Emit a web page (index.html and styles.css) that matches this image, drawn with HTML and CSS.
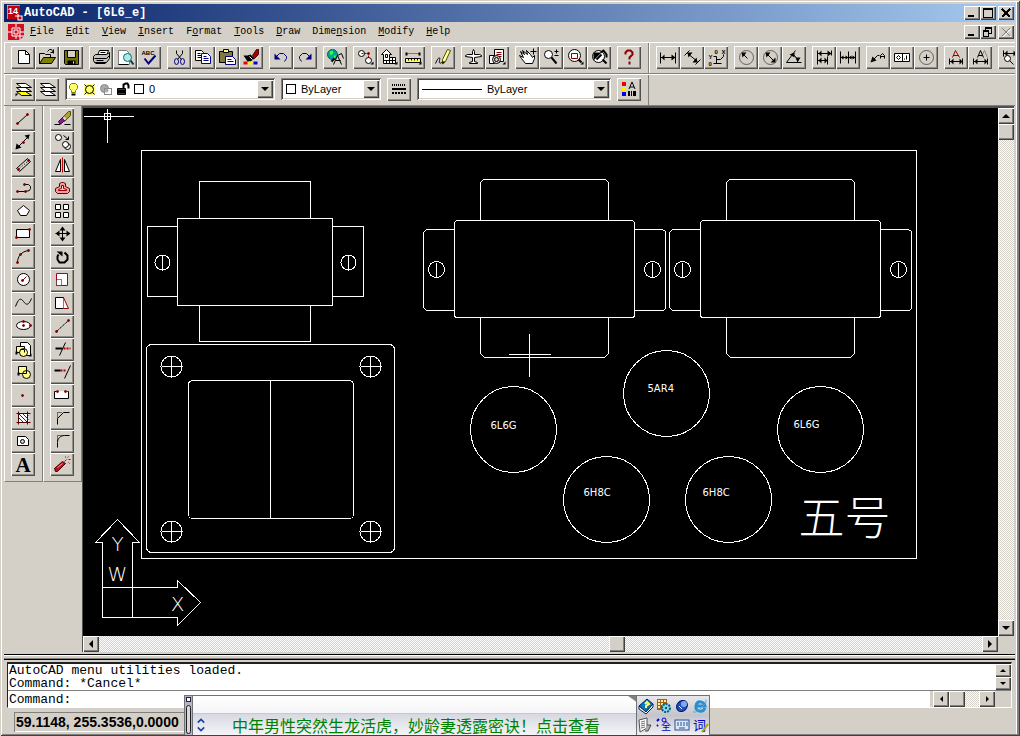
FILE: index.html
```html
<!DOCTYPE html>
<html lang="en">
<head>
<meta charset="utf-8">
<title>AutoCAD - [6L6_e]</title>
<link rel="stylesheet" href="styles.css">
</head>
<body>
<div class="window">
<header class="titlebar">
  <svg class="appicon" viewBox="0 0 16 16"><rect width="13" height="14" fill="#c00010"/><path d="M0 14V0H13" stroke="#fff" fill="none"/><text x="1" y="9" class="logo14">14</text><path d="M8 11H12M11 9V12" stroke="#fff"/><rect x="11" y="11" width="4" height="4" fill="#c00010" stroke="#fff"/></svg>
  <h1 class="title">AutoCAD - [6L6_e]</h1>
  <div class="winbtns">
    <button class="wbtn" aria-label="Minimize"><svg viewBox="0 0 16 14"><path d="M4 10H10" stroke="#000" stroke-width="2"/></svg></button>
    <button class="wbtn" aria-label="Maximize"><svg viewBox="0 0 16 14"><path d="M3.500 3H12.500V11.500H3.500V2" class="k"/><path d="M3 3H13" stroke="#000" stroke-width="2"/></svg></button>
    <button class="wbtn far" aria-label="Close"><svg viewBox="0 0 16 14"><path d="M4 3L12 11M12 3L4 11" stroke="#000" stroke-width="2"/></svg></button>
  </div>
</header>
<nav class="menubar">
  <svg class="docicon" viewBox="0 0 16 16"><path d="M0 0H16V12L12 16H0Z" fill="#d01020"/><path d="M0 8H4M12 8H16M8 0V3M8 12V15M4 4H12V12H4ZM6 6H10V10H6ZM12 16V12H16" stroke="#fff" fill="none"/></svg>
  <button class="menu"><u>F</u>ile</button><button class="menu"><u>E</u>dit</button><button class="menu"><u>V</u>iew</button><button class="menu"><u>I</u>nsert</button><button class="menu">F<u>o</u>rmat</button><button class="menu"><u>T</u>ools</button><button class="menu"><u>D</u>raw</button><button class="menu">Dime<u>n</u>sion</button><button class="menu"><u>M</u>odify</button><button class="menu"><u>H</u>elp</button>
  <div class="winbtns">
    <button class="wbtn" aria-label="Minimize drawing"><svg viewBox="0 0 16 14"><path d="M4 10H10" stroke="#000" stroke-width="2"/></svg></button>
    <button class="wbtn" aria-label="Restore drawing"><svg viewBox="0 0 16 14"><path d="M5.500 5V3.500H11.500V8.500H9M3.500 6.500H8.500V11.500H3.500Z" class="k"/><path d="M5 3H12M3 6H9" stroke="#000" stroke-width="2"/></svg></button>
    <button class="wbtn far" aria-label="Close drawing" disabled><svg viewBox="0 0 16 14"><path d="M5 4L13 12M13 4L5 12" stroke="#fff"/><path d="M4 3L12 11M12 3L4 11" stroke="#808080"/></svg></button>
  </div>
</nav>

<div class="row">
 <div class="toolbar">
  <div class="group">
   <button class="tool" aria-label="New"><svg viewBox="-.5 -.5 24 23"><path class="w" d="M7 4H14L18 8V17H7Z"/><path class="k" d="M14 4V8H18"/></svg></button>
   <button class="tool" aria-label="Open"><svg viewBox="-.5 -.5 24 23"><path d="M4 17V7H9L10 8H15V11" class="k" fill="#ffff90"/><path d="M4 17L8 11H20L16 17Z" stroke="#000" fill="#808000"/><path class="k" d="M12 5L14 3H16L18 6M18 3V7M15 6H18"/></svg></button>
   <button class="tool" aria-label="Save"><svg viewBox="-.5 -.5 24 23"><path d="M5 4H19V18H6L5 17Z" stroke="#000" fill="#707000"/><path d="M8 4H16V11H8Z" fill="#d4d0c8" stroke="#000"/><path d="M8 14H16V18H8Z" fill="#000"/><path d="M14 15V17" stroke="#fff"/></svg></button>
  </div>
  <div class="group">
   <button class="tool" aria-label="Print"><svg viewBox="-.5 -.5 24 23"><path class="w" d="M8 9L10 4H19L17 9"/><path class="k" d="M11 6H16M10 8H15"/><path d="M4 10L6 8H17L20 6V12L17 16H5L4 14Z" fill="#c8c4bc" stroke="#000"/><path class="k" d="M5 12H17L20 9M7 14H14M6 17H16"/></svg></button>
   <button class="tool" aria-label="Print preview"><svg viewBox="-.5 -.5 24 23"><path d="M5 4H13L16 7V18H5Z" fill="#fff" stroke="#808080"/><path class="k" d="M5 18H15"/><circle cx="14" cy="11" r="4" fill="#b0e8e8" stroke="#007070"/><path d="M17 14L20 18" stroke="#004050" stroke-width="2"/></svg></button>
   <button class="tool" aria-label="Spelling"><svg viewBox="-.5 -.5 24 23"><text x="4" y="8" class="tiny">ABC</text><path d="M7 12L11 17L18 9" stroke="#000080" stroke-width="2" fill="none"/></svg></button>
  </div>
  <div class="group">
   <button class="tool" aria-label="Cut"><svg viewBox="-.5 -.5 24 23"><path class="k" d="M9 4V7L14 13M15 4V7L10 13"/><g fill="none" stroke="#000080" stroke-width="1"><ellipse cx="9" cy="15" rx="2" ry="3"/><ellipse cx="15" cy="15" rx="2" ry="3"/></g></svg></button>
   <button class="tool" aria-label="Copy"><svg viewBox="-.5 -.5 24 23"><path class="w" d="M4 4H10L12 6V14H4Z"/><path class="k" d="M6 7H9M6 9H10M6 11H10"/><path d="M10 7H16L19 10V17H10Z" fill="#fff" stroke="#000080"/><path d="M12 10H15M12 12H17M12 14H17" stroke="#000080"/></svg></button>
   <button class="tool" aria-label="Paste"><svg viewBox="-.5 -.5 24 23"><path d="M4 5H17V16H4Z" fill="#807840" stroke="#000"/><path d="M8 3H13V6H8Z" fill="#ff8" stroke="#000"/><path d="M10 10H17L20 13V18H10Z" fill="#fff" stroke="#000080"/><path d="M12 13H16M12 15H18" stroke="#000080"/></svg></button>
   <button class="tool" aria-label="Match properties"><svg viewBox="-.5 -.5 24 23"><path d="M13 9L17 3H19V8L15 12Z" fill="#a00010" stroke="#500"/><path d="M4 9H8L11 8L15 12L11 15H8Z" fill="#000"/><path d="M10 10L13 13" stroke="#fff"/><rect x="4" y="15" width="4" height="3" fill="#e00"/><rect x="9" y="15" width="4" height="3" fill="#fe0"/><rect x="14" y="15" width="4" height="3" fill="#00e"/></svg></button>
  </div>
  <div class="group">
   <button class="tool" aria-label="Undo"><svg viewBox="-.5 -.5 24 23"><path d="M7 10L10 7H14L17 10V12L15 15" stroke="#000080" fill="none"/><path d="M5 7V13H11Z" fill="#000080"/></svg></button>
   <button class="tool" aria-label="Redo"><svg viewBox="-.5 -.5 24 23"><path d="M16 10L13 7H9L6 10V12L8 15" stroke="#000080" fill="none"/><path d="M18 7V13H12Z" fill="#000080"/></svg></button>
  </div>
  <div class="group">
   <button class="tool" aria-label="Launch browser"><svg viewBox="-.5 -.5 24 23"><circle cx="9" cy="8" r="5" fill="#00a0a0" stroke="#006060"/><path d="M6 5L9 4L10 7L7 9ZM10 9H13L11 12Z" fill="#3f3"/><path class="k" d="M10 18L14 9L18 18M12 14H17M14 9L18 7L20 12"/><path d="M8 15L11 12" stroke="#000" stroke-width="2"/></svg></button>
  </div>
  <div class="group">
   <button class="tool" aria-label="Object snap"><svg viewBox="-.5 -.5 24 23"><circle cx="8" cy="7" r="3" class="w"/><path d="M8 7H15V15" stroke="#800000" stroke-dasharray="2 1" fill="none"/><circle cx="15" cy="7" r="1" class="r"/><circle cx="15" cy="14" r="3" class="w"/><path d="M20 15V18H17Z"/></svg></button>
   <button class="tool" aria-label="UCS"><svg viewBox="-.5 -.5 24 23"><path class="w" d="M4 8L9 3L14 8H12V11H18V17H6V8Z"/><path class="k" d="M8 8H10V11H8ZM6 14H18M12 11V17M9 14V17M15 11V17"/><path d="M20 15V18H17Z"/></svg></button>
   <button class="tool" aria-label="Distance"><svg viewBox="-.5 -.5 24 23"><path d="M5 7H18" stroke="#800000" stroke-dasharray="1 1"/><path d="M4 6H6V9H4ZM17 6H19V9H17Z"/><path d="M4 12H19V16H4Z" fill="#ffff60" stroke="#000"/><path class="k" d="M7 12V14M10 12V14M13 12V14M16 12V14"/><path d="M20 15V18H17Z"/></svg></button>
  </div>
  <div class="group">
   <button class="tool" aria-label="Redraw"><svg viewBox="-.5 -.5 24 23"><path d="M4 17C7 10 9 10 8 14S10 17 12 14" class="k"/><path d="M11 13L16 3L19 4L14 15L11 17Z" fill="#ffffa0" stroke="#505000"/><path d="M11 15V18L14 15Z"/></svg></button>
  </div>
  <div class="group">
   <button class="tool" aria-label="Aerial view"><svg viewBox="-.5 -.5 24 23"><path class="w" d="M11 5L12 3L13 5V8H18L20 9V10L13 11V15L16 16V17H8V16L11 15V11L4 10V9L6 8H11Z"/></svg></button>
   <button class="tool" aria-label="Named views"><svg viewBox="-.5 -.5 24 23"><path class="w" d="M4 9H9V17H4ZM9 3H18V15H9Z"/><path d="M11 6H16M11 8H16M11 10H16" stroke="#800000"/><circle cx="11" cy="13" r="4" fill="#d4d0c8" stroke="#000"/><circle cx="11" cy="13" r="2" class="k"/><path d="M20 15V18H17Z"/></svg></button>
  </div>
  <div class="group">
   <button class="tool" aria-label="Pan"><svg viewBox="-.5 -.5 24 23"><path class="w" d="M5 5L9 8L7 4L12 8L11 4L15 8L17 11L19 9L19 12L17 17H10L6 12L4 9L8 11Z"/><path class="k" d="M18 2V8M15 5H21"/></svg></button>
   <button class="tool" aria-label="Zoom realtime"><svg viewBox="-.5 -.5 24 23"><circle cx="9" cy="8" r="4" class="w"/><path d="M12 11L17 17" stroke="#000" stroke-width="2"/><path class="k" d="M17 3V7M15 5H19M15 9H19"/></svg></button>
   <button class="tool" aria-label="Zoom window"><svg viewBox="-.5 -.5 24 23"><circle cx="11" cy="9" r="6" class="w"/><path d="M8 7H14V12H8Z" stroke="#800000" fill="none"/><path d="M15 13L18 16" stroke="#000" stroke-width="2"/><path d="M20 15V18H17Z"/></svg></button>
   <button class="tool" aria-label="Zoom previous"><svg viewBox="-.5 -.5 24 23"><circle cx="11" cy="10" r="6" class="w"/><path d="M6 6V14L14 6Z"/><path d="M13 6L16 4L19 8V11M15 13L19 17M9 13L14 8" stroke="#000" stroke-width="2" fill="none"/></svg></button>
  </div>
  <button class="tool" aria-label="Help"><svg viewBox="-.5 -.5 24 23"><path d="M8 8V6L10 4H13L15 6V8L12 11V13" stroke="#900000" stroke-width="2" fill="none"/><path d="M11 15H13V18H11Z" fill="#900000"/></svg></button>
 </div>
 <div class="toolbar rest">
  <div class="group">
   <button class="tool" aria-label="Linear dimension"><svg viewBox="-.5 -.5 24 23"><path class="k" d="M4 6V17M19 6V17M4 11H19"/><path d="M5 11L8 8V14ZM19 11L15 8V14Z"/></svg></button>
   <button class="tool" aria-label="Aligned dimension"><svg viewBox="-.5 -.5 24 23"><path class="k" d="M4 9L9 4M15 18L20 13M7 7L17 15"/><path d="M7 6H12L8 11ZM17 16H12L16 11Z"/></svg></button>
   <button class="tool" aria-label="Ordinate dimension"><svg viewBox="-.5 -.5 24 23"><text x="4" y="12" class="tiny">Y</text><text x="4" y="19" class="tiny">0</text><text x="10" y="7" class="tiny">0</text><text x="17" y="7" class="tiny">X</text><path class="k" d="M9 10H12V17M9 17H17M19 8V10L16 13H12"/></svg></button>
  </div>
  <div class="group">
   <button class="tool" aria-label="Radius dimension"><svg viewBox="-.5 -.5 24 23"><circle cx="12" cy="11" r="7" fill="none" stroke="#606060"/><path class="k" d="M8 7L13 12"/><path d="M7 6H12L8 11Z"/></svg></button>
   <button class="tool" aria-label="Diameter dimension"><svg viewBox="-.5 -.5 24 23"><circle cx="12" cy="11" r="7" fill="none" stroke="#606060"/><path class="k" d="M8 7L16 15"/><path d="M7 6H12L8 11ZM17 16H12L17 11Z"/></svg></button>
   <button class="tool" aria-label="Angular dimension"><svg viewBox="-.5 -.5 24 23"><path class="k" d="M4 16H19M4 16L13 4M9 8L12 9L15 13"/><path d="M7 8L12 6V11ZM13 11H18L15 16Z"/></svg></button>
  </div>
  <div class="group">
   <button class="tool" aria-label="Baseline dimension"><svg viewBox="-.5 -.5 24 23"><path class="k" d="M5 4V18M5 7H19M5 14H15M15 10V18M19 4V9"/><path d="M6 7L9 4V10ZM19 7L15 4V10ZM6 14L9 11V17ZM15 14L12 11V17Z"/></svg></button>
   <button class="tool" aria-label="Continue dimension"><svg viewBox="-.5 -.5 24 23"><path class="k" d="M4 5V17M12 5V17M19 5V17M4 11H19"/><path d="M4 11L7 9V13ZM12 11L9 9V13ZM12 11L15 9V13ZM19 11L16 9V13Z"/></svg></button>
  </div>
  <div class="group">
   <button class="tool" aria-label="Leader"><svg viewBox="-.5 -.5 24 23"><path class="k" d="M5 15L11 9H13"/><path d="M4 16L6 10L10 14Z"/><path class="k" d="M14 12V9L16 7L18 9V12M14 10H18"/></svg></button>
   <button class="tool" aria-label="Tolerance"><svg viewBox="-.5 -.5 24 23"><path class="w" d="M4 7H19V15H4ZM12 7V15M8 9L10 11L8 13L6 11ZM16 9V13"/><path class="k" d="M14 13V12"/></svg></button>
   <button class="tool" aria-label="Center mark"><svg viewBox="-.5 -.5 24 23"><circle cx="12" cy="11" r="7" fill="none" stroke="#606060"/><path class="k" d="M9 11H15M12 8V14"/></svg></button>
  </div>
  <div class="group">
   <button class="tool" aria-label="Dimension edit"><svg viewBox="-.5 -.5 24 23"><path d="M8 11L11 4L15 11M9 9H14" stroke="#900000" fill="none"/><path class="k" d="M5 12V18M18 12V18M5 15H18"/><path d="M6 15L9 12V18ZM18 15L15 12V18Z"/></svg></button>
   <button class="tool" aria-label="Dimension text edit"><svg viewBox="-.5 -.5 24 23"><path d="M13 10L16 4L19 11" stroke="#888" fill="none"/><path class="k" d="M9 11L12 4L15 11M10 9H14M5 12V18M19 12V18M5 15H19"/><path d="M6 15L9 12V18ZM19 15L16 12V18Z"/></svg></button>
  </div>
  <button class="tool" aria-label="Dimension style"><svg viewBox="-.5 -.5 24 23"><path class="k" d="M5 4V10M5 7H18M11 14L15 18"/><path d="M6 7L9 4V10ZM18 7L15 4V10Z"/><circle cx="9" cy="12" r="3" class="w"/></svg></button>
 </div>
</div>

<div class="row">
 <div class="toolbar">
  <div class="group">
   <button class="tool" aria-label="Make layer current"><svg viewBox="-.5 -.5 24 23"><path d="M5 13H14L20 17H10Z" fill="#ff0" stroke="#000"/><path class="w" d="M5 9H14L20 13H10ZM5 5H14L20 9H10Z"/><path d="M4 18V15H7Z"/></svg></button>
   <button class="tool" aria-label="Layers"><svg viewBox="-.5 -.5 24 23"><path class="w" d="M5 13H14L20 17H10ZM5 9H14L20 13H10ZM5 5H14L20 9H10Z"/></svg></button>
  </div>
  <div class="combo layer">
   <svg class="layericons" viewBox="-.5 -.5 80 16"><path d="M4 9L2 7V4L4 2H8L10 4V7L8 9V11H4Z" fill="#ff6" stroke="#808000"/><path d="M4 12H8V14H4Z"/><path d="M17 3H27V13H17Z" fill="#ff0"/><circle cx="22" cy="8" r="4" fill="#ff6" stroke="#000"/><path d="M17 3L19 5M27 3L25 5M17 13L19 11M27 13L25 11" class="k"/><circle cx="37" cy="7" r="4" fill="#aaa" stroke="#888"/><rect x="37" y="7" width="7" height="6" fill="#fff" stroke="#888"/><circle cx="39" cy="9" r="2" fill="#aaa"/><path d="M50 7H58V13H50Z" fill="#808000" stroke="#000"/><path d="M50 9H58M50 11H58M56 7V3L58 2H60L61 4V7" stroke="#000" fill="none" stroke-width="2"/><rect x="67" y="3" width="9" height="9" class="w"/></svg>
   <select aria-label="Layer"><option>0</option></select><span class="drop"></span>
  </div>
  <div class="combo color">
   <svg class="swatch" viewBox="-.5 -.5 16 16"><rect x="3" y="3" width="9" height="9" class="w"/></svg>
   <select aria-label="Color"><option>ByLayer</option></select><span class="drop"></span>
  </div>
  <button class="tool" aria-label="Linetype"><svg viewBox="0 0 24 23"><path d="M5 7H19" stroke="#000" stroke-width="2" stroke-dasharray="1 1"/><path d="M5 11H19" stroke="#000" stroke-width="2"/><path d="M5 15H19" stroke="#000" stroke-width="2" stroke-dasharray="2 1"/></svg></button>
  <div class="combo ltype">
   <span class="linesample"></span>
   <select aria-label="Linetype name"><option>ByLayer</option></select><span class="drop"></span>
  </div>
  <button class="tool" aria-label="Properties"><svg viewBox="0 0 24 23"><path d="M5 4H9V8H5Z" fill="#e00"/><path d="M5 9H9V13H5Z" fill="#fe0"/><path d="M5 14H9V18H5Z" fill="#00e"/><path class="k" d="M12 11L15 4L18 11M13 9H17"/><path d="M11 13H13V18H11ZM14 13H15V18H14ZM16 13H19V18H16Z"/></svg></button>
 </div>
</div>

<main class="workspace">
 <div class="side">
  <button class="tool" aria-label="Line"><svg viewBox="-.5 -.5 24 23"><path class="k" d="M6 15L16 6"/><circle cx="6" cy="15" r="1" class="r"/><circle cx="16" cy="6" r="1" class="r"/></svg></button>
  <button class="tool" aria-label="Construction line"><svg viewBox="-.5 -.5 24 23"><path class="k" d="M5 17L18 4"/><path d="M18 3L17 8L13 4ZM4 18L5 12L10 16Z"/><circle cx="12" cy="11" r="1" class="r"/></svg></button>
  <button class="tool" aria-label="Multiline"><svg viewBox="-.5 -.5 24 23"><path class="k" d="M5 14L16 4L19 7L8 17Z"/><path class="k" d="M8 14L16 7" stroke-dasharray="1 2"/><circle cx="7" cy="15" r="1" class="r"/><circle cx="17" cy="6" r="1" class="r"/></svg></button>
  <button class="tool" aria-label="Polyline"><svg viewBox="-.5 -.5 24 23"><path class="k" d="M6 14H14L18 13L19 11V9L17 7H13"/><circle cx="6" cy="14" r="1" class="r"/><circle cx="14" cy="14" r="1" class="r"/><circle cx="13" cy="7" r="1" class="r"/></svg></button>
  <button class="tool" aria-label="Polygon"><svg viewBox="-.5 -.5 24 23"><path class="w" d="M12 5L18 10L15 15H9L6 10Z"/></svg></button>
  <button class="tool" aria-label="Rectangle"><svg viewBox="-.5 -.5 24 23"><path class="w" d="M5 6H18V14H5Z"/><circle cx="5" cy="14" r="1" class="r"/><circle cx="18" cy="6" r="1" class="r"/></svg></button>
  <button class="tool" aria-label="Arc"><svg viewBox="-.5 -.5 24 23"><path class="k" d="M6 16C6 10 10 5 17 4"/><circle cx="6" cy="16" r="1" class="r"/><circle cx="9" cy="8" r="1" class="r"/><circle cx="17" cy="4" r="1" class="r"/></svg></button>
  <button class="tool" aria-label="Circle"><svg viewBox="-.5 -.5 24 23"><circle cx="12" cy="10" r="6" class="w"/><path d="M11 11L15 7" stroke="#900000"/><circle cx="11" cy="11" r="1" class="r"/></svg></button>
  <button class="tool" aria-label="Spline"><svg viewBox="-.5 -.5 24 23"><path class="k" d="M4 14C7 6 9 5 12 9S17 13 20 6"/></svg></button>
  <button class="tool" aria-label="Ellipse"><svg viewBox="-.5 -.5 24 23"><ellipse cx="12" cy="10" rx="7" ry="4" class="w"/><circle cx="12" cy="10" r="1" class="r"/><circle cx="12" cy="6" r="1" class="r"/><circle cx="19" cy="10" r="1" class="r"/></svg></button>
  <button class="tool" aria-label="Insert block"><svg viewBox="-.5 -.5 24 23"><path class="w" d="M9 4H16L19 7V17H9Z"/><path d="M5 8H13V14H5Z" fill="#ff8" stroke="#000"/><circle cx="12" cy="14" r="4" fill="#ff8" stroke="#000"/><path class="k" d="M9 11H13V14"/><path d="M20 15V18H17ZM4 13H6V16H4Z"/></svg></button>
  <button class="tool" aria-label="Make block"><svg viewBox="-.5 -.5 24 23"><path d="M7 5H15V12H7Z" fill="#ff8" stroke="#000"/><circle cx="15" cy="13" r="4" fill="#ff8" stroke="#000"/><path class="k" d="M11 12H15V9"/><path d="M6 11H8V14H6Z"/></svg></button>
  <button class="tool" aria-label="Point"><svg viewBox="-.5 -.5 24 23"><circle cx="11" cy="11" r="1" class="r"/></svg></button>
  <button class="tool" aria-label="Hatch"><svg viewBox="-.5 -.5 24 23"><path d="M7 6H17V15H7Z" fill="#fff"/><path d="M7 6L16 15M11 6L17 12M15 6L17 8M7 10L12 15" stroke="#900000"/><path d="M7 4V17M16 4V17M5 6H19M5 15H19" stroke="#500000"/></svg></button>
  <button class="tool" aria-label="Region"><svg viewBox="-.5 -.5 24 23"><path class="w" d="M6 6H14L17 9V15H6Z"/><circle cx="11" cy="11" r="2" fill="#ccc" stroke="#000"/></svg></button>
  <button class="tool letter" aria-label="Multiline text">A</button>
 </div>
 <div class="side">
  <button class="tool" aria-label="Erase"><svg viewBox="-.5 -.5 24 23"><path class="k" d="M4 16H10M14 16H20"/><path d="M12 9L18 3H20V7L14 13Z" fill="#b0a030" stroke="#505000"/><path d="M8 13L12 9L14 12L11 15H9Z" fill="#80208a" stroke="#404"/><path d="M13 9L15 11" stroke="#ddf" stroke-width="2"/></svg></button>
  <button class="tool" aria-label="Copy object"><svg viewBox="-.5 -.5 24 23"><circle cx="8" cy="6" r="3" class="w"/><circle cx="17" cy="15" r="3" class="w"/><circle cx="15" cy="13" r="3" class="w"/><path class="k" d="M13 4L18 8M18 5V8H15"/></svg></button>
  <button class="tool" aria-label="Mirror"><svg viewBox="-.5 -.5 24 23"><path class="w" d="M10 5V17H5ZM14 5V17H19Z"/><path d="M12 3V18" stroke="#c00"/></svg></button>
  <button class="tool" aria-label="Offset"><svg viewBox="-.5 -.5 24 23"><path d="M9 9V6L11 5H13L15 6V9L19 11V14L17 16H7L5 14V11Z" fill="#f0a0a0" stroke="#600"/><path d="M11 8H13V11L16 12V13H8V12L11 11Z" fill="#ffd0d0" stroke="#900"/></svg></button>
  <button class="tool" aria-label="Array"><svg viewBox="-.5 -.5 24 23"><path class="w" d="M5 4H10V9H5ZM13 4H18V9H13ZM5 12H10V17H5ZM13 12H18V17H13Z"/></svg></button>
  <button class="tool" aria-label="Move"><svg viewBox="-.5 -.5 24 23"><path class="k" d="M12 4V17M5 10H19"/><path d="M12 3L15 7H9ZM12 18L15 14H9ZM5 10L9 7V13ZM20 10L16 7V13Z"/></svg></button>
  <button class="tool" aria-label="Rotate"><svg viewBox="-.5 -.5 24 23"><path d="M8 8L7 10V13L9 16H14L17 13V9L14 6" stroke="#000" stroke-width="2" fill="none"/><path d="M6 5H12V10Z"/></svg></button>
  <button class="tool" aria-label="Scale"><svg viewBox="-.5 -.5 24 23"><path d="M6 4H17V16H6Z" fill="#fff" stroke="#b00020"/><path class="w" d="M6 10H11V16H6Z" stroke-dasharray="1 1"/></svg></button>
  <button class="tool" aria-label="Stretch"><svg viewBox="-.5 -.5 24 23"><path class="w" d="M5 5H13V16H5Z"/><path d="M13 5L18 16H13" stroke="#900" fill="#fff"/></svg></button>
  <button class="tool" aria-label="Lengthen"><svg viewBox="-.5 -.5 24 23"><path class="k" d="M6 16L18 5" stroke-dasharray="3 1"/><circle cx="6" cy="16" r="1" class="r"/><circle cx="18" cy="5" r="1" class="r"/></svg></button>
  <button class="tool" aria-label="Trim"><svg viewBox="-.5 -.5 24 23"><path d="M5 10H12" stroke="#000" stroke-width="2"/><path class="k" d="M9 17L15 4"/><path d="M13 10H20" stroke="#a00" stroke-dasharray="2 1" stroke-width="2"/></svg></button>
  <button class="tool" aria-label="Extend"><svg viewBox="-.5 -.5 24 23"><path d="M4 9H10" stroke="#000" stroke-width="2"/><path d="M10 9H15" stroke="#a00" stroke-dasharray="2 1" stroke-width="2"/><path class="k" d="M14 17L20 4"/></svg></button>
  <button class="tool" aria-label="Break"><svg viewBox="-.5 -.5 24 23"><path class="w" d="M7 7H4V14H18V7H16"/><path d="M6 7H17V13H6Z" fill="#fff"/><circle cx="7" cy="7" r="1" class="r"/><circle cx="15" cy="7" r="1" class="r"/></svg></button>
  <button class="tool" aria-label="Chamfer"><svg viewBox="-.5 -.5 24 23"><path class="k" d="M7 17V11L13 5H19"/><path class="k" d="M7 10V5H12" stroke-dasharray="1 1"/></svg></button>
  <button class="tool" aria-label="Fillet"><svg viewBox="-.5 -.5 24 23"><path class="k" d="M7 17V12C7 8 10 5 14 5H19"/><path class="k" d="M7 10V5H12" stroke-dasharray="1 1"/></svg></button>
  <button class="tool" aria-label="Explode"><svg viewBox="-.5 -.5 24 23"><path d="M4 15L12 8L15 10L7 18H5Z" fill="#c01020" stroke="#400"/><path d="M7 14L12 10" stroke="#f99"/><path d="M14 8L16 6M15 3V4M18 3L17 4M20 6H18M19 10L18 9" stroke="#a00"/></svg></button>
 </div>
 <section class="view">
  <div class="canvas">
   <svg class="drawing" viewBox="82.500 107.500 915 528" preserveAspectRatio="xMidYMid meet" role="img" aria-label="Chassis layout">
    <g class="line">
     <rect x="141" y="150" width="775" height="408"/>
     <path d="M199 218V181H310V218M199 305V341H310V305M177 226H147V296H177M332 226H363V296H332"/>
     <rect x="177" y="218" width="155" height="87"/>
     <circle cx="162" cy="262" r="7.500"/><circle cx="348" cy="262" r="7.500"/><path d="M162 255V269M348 255V269"/>
     <g id="xfmr">
      <rect x="454" y="220" width="180" height="97" rx="3"/>
      <path d="M480 220V182L483 179H605L608 182V220M480 317V353L484 357H604L608 353V317M454 229H426L423 232V307L426 310H454M634 229H662L665 231V308L663 310H634"/>
      <circle cx="436" cy="269" r="8"/><circle cx="652" cy="269" r="8"/><path d="M436 262V277M652 262V277"/>
     </g>
     <use href="#xfmr" x="246"/>
     <rect x="146" y="344" width="248" height="208" rx="5"/>
     <rect x="188" y="380" width="165" height="138" rx="4"/>
     <path d="M270 380V518"/>
     <g id="bolt"><circle cx="171" cy="366" r="10.500"/><path d="M161 366H182M171 356V377"/></g>
     <use href="#bolt" x="199"/><use href="#bolt" y="165"/><use href="#bolt" x="199" y="165"/>
     <circle cx="513" cy="429" r="43"/><circle cx="666" cy="393" r="43"/><circle cx="820" cy="429" r="43"/>
     <circle cx="606" cy="499" r="43"/><circle cx="728" cy="499" r="43"/>
     <path d="M508 354H550M529 333V376"/>
     <path d="M83 116H133M107 108V142"/><rect x="104" y="113" width="6" height="6"/>
     <path d="M117 519L139 542H132V617M132 587H177V580L200 602L177 625V617H102V542H95L117 519M102 587H132"/>
    </g>
    <g class="label">
     <text x="490" y="428">6L6G</text><text x="647" y="391">5AR4</text><text x="793" y="427">6L6G</text><text x="583" y="495">6H8C</text><text x="702" y="495">6H8C</text>
    </g>
    <g class="axis"><text x="117" y="550">Y</text><text x="117" y="580">W</text><text x="177" y="610">X</text></g>
    <text class="hanzi" x="798" y="533">五号</text>
   </svg>
  </div>
  <div class="vscroll"><button class="sb" aria-label="Scroll up"><i class="up"></i></button><span class="sb"></span><span class="fill"></span><button class="sb" aria-label="Scroll down"><i class="down"></i></button></div>
  <div class="hscroll"><button class="sb" aria-label="Scroll left"><i class="left"></i></button><span class="before"></span><span class="sb"></span><span class="after"></span><button class="sb" aria-label="Scroll right"><i class="right"></i></button></div>
 </section>
</main>
<div class="splitter"></div>
<section class="command">
 <div class="history"><div class="log">AutoCAD menu utilities loaded.<br>Command: *Cancel*</div>
  <div class="mini"><button class="sb" aria-label="History up"><i class="up"></i></button><button class="sb" aria-label="History down"><i class="down"></i></button></div></div>
 <div class="prompt"><label for="cmd">Command:</label><input id="cmd" type="text">
  <div class="minih"><button class="sb" aria-label="Command left"><i class="left"></i></button><span class="sb"></span><span class="gap"></span><button class="sb" aria-label="Command right"><i class="right"></i></button></div></div>
</section>
<footer class="status"><output class="coords">59.1148, 255.3536,0.0000</output></footer>

<aside class="ime">
 <div class="grip"><span class="knob"></span><span class="bar"></span></div>
 <div class="adbox"><div class="adtop"></div>
  <div class="adline"><svg class="spin" viewBox="0 0 10 16"><path d="M1 5L5 1L9 5M1 11L5 15L9 11" stroke="#1840a0" stroke-width="2" fill="none"/></svg><a href="#" lang="zh">中年男性突然生龙活虎，妙龄妻透露密诀！点击查看</a></div></div>
 <div class="imegrid">
  <button aria-label="Dictionary"><svg viewBox="0 0 16 16"><path d="M1 8L9 1L15 6L8 14Z" fill="#0878b8" stroke="#002060"/><path d="M1 8V11L8 16L15 9V6L8 14Z" fill="#fff" stroke="#002060"/><path d="M7 6L9 4L11 6L8 8V10" stroke="#ff6" stroke-width="2" fill="none"/></svg></button>
  <button aria-label="Settings"><svg viewBox="0 0 16 16"><path d="M1 1H11V12H1Z" fill="#a06010"/><path d="M2 2H4V4H2ZM5 2H7V4H5ZM8 2H10V4H8ZM2 5H4V7H2ZM5 5H7V7H5ZM2 8H4V10H2Z" fill="#fff0a0"/><circle cx="10" cy="10" r="4" fill="#80d8e8" stroke="#006080" stroke-width="2" stroke-dasharray="2 1"/><circle cx="10" cy="10" r="1" fill="#002060"/></svg></button>
  <button aria-label="Messages"><svg viewBox="0 0 16 16"><ellipse cx="8" cy="8" rx="5" ry="6" fill="#2050b0" stroke="#001070" transform="rotate(40 8 8)"/><circle cx="10" cy="6" r="3" fill="#80a8f0"/><path d="M5 8L8 11" stroke="#fff"/></svg></button>
  <button aria-label="Browser"><svg viewBox="0 0 16 16"><path d="M13 10C11 15 3 14 4 8S12 3 13 8H5" stroke="#2890d0" stroke-width="3" fill="none"/><path d="M2 13C0 16 5 14 9 10S16 2 13 2" stroke="#50b0e0" fill="none"/></svg></button>
  <button aria-label="Handwriting"><svg viewBox="0 0 16 16"><path d="M1 3L9 1V11L2 15Z" fill="#fff" stroke="#505050"/><path d="M3 5L7 4M3 7L7 6M3 9L7 8M3 11L7 10" stroke="#707070"/><path d="M9 8H13L10 14H7" fill="#aaa" stroke="#505050"/></svg></button>
  <button class="word" aria-label="Full width"><svg viewBox="0 0 16 16"><path d="M1 4L3 2M2 8L1 9" stroke="#00c" stroke-width="2"/><circle cx="8" cy="3" r="2" fill="none" stroke="#00c"/><text x="5" y="13" font-size="10">全</text></svg></button>
  <button aria-label="Keyboard"><svg viewBox="0 0 16 16"><rect x="1" y="3" width="14" height="10" fill="#d8e8f8" stroke="#305090"/><path d="M3 6H14M3 8H14" stroke="#305090" stroke-dasharray="2 1"/><path d="M5 11H11" stroke="#305090"/></svg></button>
  <button class="word" aria-label="Words"><svg viewBox="0 0 16 16"><text x="1" y="13" font-size="13">词</text><path d="M10 15L16 7" stroke="#aa0" stroke-width="2"/></svg></button>
 </div>
</aside>
</div>
</body>
</html>
```

FILE: styles.css
```css
* { box-sizing: border-box; }
body { margin: 0; background: #d4d0c8; font-family: "Liberation Sans", "Noto Sans CJK SC", sans-serif; color: #000; }
button { font: inherit; color: inherit; background: none; border: 0; padding: 0; margin: 0; }
svg { display: block; flex: none; }

.window {
  position: relative; min-height: 100vh; display: flex; flex-direction: column;
  padding: 4px 5px 4px 4px; background: #d4d0c8;
  box-shadow: inset 1px 1px #d4d0c8, inset -1px -1px #404040, inset 2px 2px #fff, inset -3px -2px #808080, inset -4px -2px #fff;
}

/* title and menu */
.titlebar { display: flex; align-items: center; height: 18px; padding: 0 1px 0 3px; background: linear-gradient(90deg, #0a246a, #a6caf0); }
.appicon { width: 16px; height: 16px; }
.logo14 { font: bold 9px "Liberation Sans", sans-serif; fill: #fff; }
.title { flex: 1; margin: 0 0 0 1px; font: bold 12px/18px "Liberation Mono", monospace; color: #fff; white-space: nowrap; }
.winbtns { display: flex; margin-left: auto; }
.wbtn { width: 16px; height: 14px; background: #d4d0c8; box-shadow: inset 1px 1px #fff, inset -1px -1px #404040, inset -2px -2px #808080; }
.wbtn svg { width: 16px; height: 14px; shape-rendering: crispEdges; }
.wbtn.far { margin-left: 2px; }
.menubar { display: flex; align-items: center; height: 20px; padding: 0 1px 0 4px; }
.docicon { width: 16px; height: 16px; }
.menu { padding: 0 6px; font: 10px/18px "Liberation Mono", monospace; }

/* tool buttons */
.row { display: flex; height: 32px; border-top: 1px solid #fff; border-bottom: 1px solid #808080; }
.toolbar { display: flex; align-items: flex-start; gap: 6px; padding: 3px 7px 0 6px; border-left: 1px solid #fff; border-right: 1px solid #808080; }
.toolbar.rest { flex: 1; min-width: 0; overflow: hidden; padding-right: 0; border-right: 0; }
.group { display: flex; flex: none; }
.tool { flex: none; width: 24px; height: 23px; overflow: hidden; background: #d4d0c8; box-shadow: inset 1px 1px #fff, inset -1px -1px #505050, inset -2px -2px #909088; }
.tool svg { width: 24px; height: 23px; }
.k { fill: none; stroke: #000; }
.w { fill: #fff; stroke: #000; }
.r { fill: #800000; stroke: #800000; }
.tiny { font: bold 6px "Liberation Sans", sans-serif; }
.letter { font: bold 21px/22px "Liberation Serif", serif; }

.combo { display: flex; align-items: center; height: 22px; padding: 2px; background: #fff; box-shadow: inset 1px 1px #808080, inset -1px -1px #fff, inset 2px 2px #404040, inset -2px -2px #d4d0c8; }
.combo.layer { width: 210px; }
.combo.color { width: 100px; }
.combo.ltype { width: 194px; }
.combo select { flex: 1; min-width: 0; height: 18px; margin: 0; padding: 0 2px; border: 0; appearance: none; background: transparent; color: #000; font: 11px "Liberation Sans", sans-serif; }
.layericons { width: 80px; height: 16px; }
.swatch { width: 16px; height: 16px; }
.linesample { width: 60px; height: 1px; margin: 0 3px; background: #000; }
.drop { flex: none; display: flex; width: 16px; height: 18px; align-items: center; justify-content: center; background: #d4d0c8; box-shadow: inset 1px 1px #fff, inset -1px -1px #404040, inset -2px -2px #808080; }
.drop::after { content: ""; border: 4px solid transparent; border-top-color: #000; border-bottom: 0; }

/* workspace */
.workspace { flex: 1; display: flex; min-height: 0; }
.side { flex: none; align-self: flex-start; display: flex; flex-direction: column; width: 39px; padding: 2px 0 5px 6px; border: solid #808080; border-width: 0 1px 1px 0; border-left: 1px solid #fff; }
.view { flex: 1; min-width: 0; display: grid; grid-template: 1fr 16px / 1fr 16px; margin: 0 1px 2px 0; border-top: 2px solid #505050; border-left: 1px solid #505050; }
.canvas { position: relative; min-width: 0; min-height: 0; background: #000; }
.drawing { position: absolute; inset: 0; width: 100%; height: 100%; }
.line { fill: none; stroke: #fff; stroke-width: 1; shape-rendering: crispEdges; }
.label { fill: #fff; font: 10px "DejaVu Sans", sans-serif; }
.axis { fill: #fff; font: 200 20px "DejaVu Sans", sans-serif; text-anchor: middle; }
.hanzi { fill: #fff; font: 300 46px "Noto Sans CJK SC", sans-serif; }

.vscroll, .hscroll, .gap { background: repeating-conic-gradient(#fff 0 25%, #d4d0c8 0 50%) 0 0 / 2px 2px; }
.vscroll { display: flex; flex-direction: column; }
.hscroll { display: flex; }
.fill { flex: 1; }
.before { flex: 509; }
.after { flex: 357; }
.sb { flex: none; display: flex; align-items: center; justify-content: center; width: 16px; height: 16px; background: #d4d0c8; box-shadow: inset 1px 1px #fff, inset -1px -1px #404040, inset -2px -2px #808080; }
.sb i { border: 4px solid transparent; }
.sb .up { border-top: 0; border-bottom-color: #000; }
.sb .down { border-bottom: 0; border-top-color: #000; }
.sb .left { border-left: 0; border-right-color: #000; }
.sb .right { border-right: 0; border-left-color: #000; }

/* command window */
.splitter { height: 6px; border: solid #000; border-width: 1px 0; box-shadow: inset 0 1px #fff, inset 0 -1px #808080; }
.command { margin: 2px 3px 0 3px; border: 1px solid #fff; border-top: 2px solid #202020; border-left-color: #202020; background: #fff; font: 13px/13px "Liberation Mono", monospace; }
.history { display: flex; height: 27px; border-bottom: 1px solid #808080; }
.log { flex: 1; padding-left: 1px; }
.mini .sb { height: 13px; }
.mini i, .minih i { border-width: 3px; }
.prompt { display: flex; align-items: center; height: 16px; padding-left: 1px; }
.prompt input { flex: 1; min-width: 0; height: 15px; padding: 0 4px; border: 0; outline: 0; background: transparent; font: inherit; }
.minih { display: flex; padding: 0 16px 0 3px; background: #d4d0c8; }
.minih .gap { width: 14px; }

/* status bar */
.status { height: 24px; padding: 4px 0 0 10px; background: #d4d0c8; }
.coords { display: block; width: 480px; height: 20px; padding-left: 2px; font: bold 14px/20px "Liberation Sans", sans-serif; box-shadow: inset 1px 1px #808080, inset -1px -1px #fff; }

/* floating input-method bar */
.ime { position: absolute; left: 184px; bottom: 1px; display: flex; width: 526px; height: 40px; border: 1px solid #707078; border-bottom: 0; background: #e4e4ea; }
.grip { display: flex; flex-direction: column; align-items: center; gap: 3px; width: 8px; padding-top: 1px; background: #b8b4c0; border-right: 1px solid #707078; }
.knob { width: 5px; height: 5px; border: 1px solid #202040; background: #fff; }
.bar { flex: 1; width: 5px; margin-bottom: 1px; border: 1px solid #202020; border-radius: 3px; background: #d8d8e0; }
.adbox { flex: 1; display: flex; flex-direction: column; background: linear-gradient(#fff, #e8e8ee); }
.adtop { height: 18px; border-bottom: 1px solid #c8c8d0; background: linear-gradient(215deg, #808080 4px, transparent 5px); }
.adline { flex: 1; display: flex; align-items: center; background: linear-gradient(#d8d8e2, #f4f4f8); }
.adline a { margin-left: 27px; color: #008000; font: 16px/20px "Noto Sans CJK SC", sans-serif; text-decoration: none; white-space: nowrap; }
.spin { width: 8px; height: 14px; margin-left: 4px; }
.imegrid { display: grid; grid-template-columns: repeat(4, 18px); align-items: center; justify-items: center; width: 73px; border-left: 1px solid #707078; background: linear-gradient(#e8e8ec, #c4c4cc 50%, #f0f0f4); }
.imegrid svg { width: 16px; height: 16px; overflow: visible; }
.word { fill: #0000c0; font-family: "Noto Sans CJK SC", sans-serif; }
```
